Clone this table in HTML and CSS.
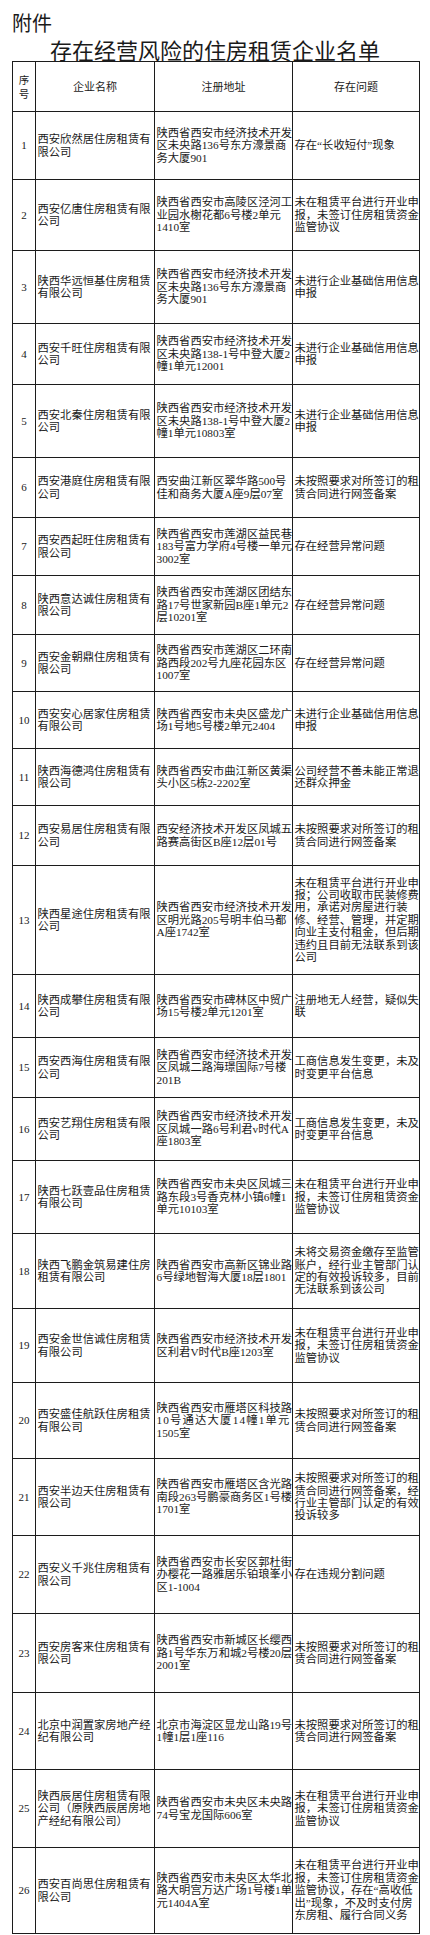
FILE: index.html
```html
<!DOCTYPE html>
<html lang="zh-CN">
<head>
<meta charset="utf-8">
<title>存在经营风险的住房租赁企业名单</title>
<link rel="stylesheet" href="styles.css">
</head>
<body>
<div class="page">
  <div class="att">附件</div>
  <h1 class="title">存在经营风险的住房租赁企业名单</h1>
  <table class="list">
    <colgroup>
      <col class="c-no"><col class="c-name"><col class="c-addr"><col class="c-issue">
    </colgroup>
    <thead>
      <tr class="h50">
        <th class="seq"><span class="seq-line">序</span><span class="seq-line">号</span></th><th>企业名称</th><th>注册地址</th><th>存在问题</th>
      </tr>
    </thead>
    <tbody>
      <tr class="h68"><td class="no">1</td><td>西安欣然居住房租赁有<br>限公司</td><td>陕西省西安市经济技术开发<br>区未央路136号东方濠景商<br>务大厦901</td><td>存在“长收短付”现象</td></tr>
      <tr class="h71"><td class="no">2</td><td>西安亿唐住房租赁有限<br>公司</td><td>陕西省西安市高陵区泾河工<br>业园水榭花都6号楼2单元<br>1410室</td><td>未在租赁平台进行开业申<br>报，未签订住房租赁资金<br>监管协议</td></tr>
      <tr class="h73"><td class="no">3</td><td>陕西华远恒基住房租赁<br>有限公司</td><td>陕西省西安市经济技术开发<br>区未央路136号东方濠景商<br>务大厦901</td><td>未进行企业基础信用信息<br>申报</td></tr>
      <tr class="h61"><td class="no">4</td><td>西安千旺住房租赁有限<br>公司</td><td>陕西省西安市经济技术开发<br>区未央路138-1号中登大厦2<br>幢1单元12001</td><td>未进行企业基础信用信息<br>申报</td></tr>
      <tr class="h73"><td class="no">5</td><td>西安北秦住房租赁有限<br>公司</td><td>陕西省西安市经济技术开发<br>区未央路138-1号中登大厦2<br>幢1单元10803室</td><td>未进行企业基础信用信息<br>申报</td></tr>
      <tr class="h60"><td class="no">6</td><td>西安港庭住房租赁有限<br>公司</td><td>西安曲江新区翠华路500号<br>佳和商务大厦A座9层07室</td><td>未按照要求对所签订的租<br>赁合同进行网签备案</td></tr>
      <tr class="h58"><td class="no">7</td><td>西安西起旺住房租赁有<br>限公司</td><td>陕西省西安市莲湖区益民巷<br>183号富力学府4号楼一单元<br>3002室</td><td>存在经营异常问题</td></tr>
      <tr class="h59"><td class="no">8</td><td>陕西意达诚住房租赁有<br>限公司</td><td>陕西省西安市莲湖区团结东<br>路17号世家新园B座1单元2<br>层10201室</td><td>存在经营异常问题</td></tr>
      <tr class="h57"><td class="no">9</td><td>西安金朝鼎住房租赁有<br>限公司</td><td>陕西省西安市莲湖区二环南<br>路西段202号九座花园东区<br>1007室</td><td>存在经营异常问题</td></tr>
      <tr class="h57"><td class="no">10</td><td>西安安心居家住房租赁<br>有限公司</td><td>陕西省西安市未央区盛龙广<br>场1号地5号楼2单元2404</td><td>未进行企业基础信用信息<br>申报</td></tr>
      <tr class="h57"><td class="no">11</td><td>陕西海德鸿住房租赁有<br>限公司</td><td>陕西省西安市曲江新区黄渠<br>头小区5栋2-2202室</td><td>公司经营不善未能正常退<br>还群众押金</td></tr>
      <tr class="h60"><td class="no">12</td><td>西安易居住房租赁有限<br>公司</td><td>西安经济技术开发区凤城五<br>路赛高街区B座12层01号</td><td>未按照要求对所签订的租<br>赁合同进行网签备案</td></tr>
      <tr class="h109"><td class="no">13</td><td>陕西星途住房租赁有限<br>公司</td><td>陕西省西安市经济技术开发<br>区明光路205号明丰伯马都<br>A座1742室</td><td>未在租赁平台进行开业申<br>报；公司收取市民装修费<br>用，承诺对房屋进行装<br>修、经营、管理，并定期<br>向业主支付租金，但后期<br>违约且目前无法联系到该<br>公司</td></tr>
      <tr class="h63"><td class="no">14</td><td>陕西成攀住房租赁有限<br>公司</td><td>陕西省西安市碑林区中贸广<br>场15号楼2单元1201室</td><td>注册地无人经营，疑似失<br>联</td></tr>
      <tr class="h60"><td class="no">15</td><td>西安西海住房租赁有限<br>公司</td><td>陕西省西安市经济技术开发<br>区凤城二路海璟国际7号楼<br>201B</td><td>工商信息发生变更，未及<br>时变更平台信息</td></tr>
      <tr class="h63"><td class="no">16</td><td>西安艺翔住房租赁有限<br>公司</td><td>陕西省西安市经济技术开发<br>区凤城一路6号利君v时代A<br>座1803室</td><td>工商信息发生变更，未及<br>时变更平台信息</td></tr>
      <tr class="h73"><td class="no">17</td><td>陕西七跃壹品住房租赁<br>有限公司</td><td>陕西省西安市未央区凤城三<br>路东段3号香克林小镇6幢1<br>单元10103室</td><td>未在租赁平台进行开业申<br>报，未签订住房租赁资金<br>监管协议</td></tr>
      <tr class="h75"><td class="no">18</td><td>陕西飞鹏金筑易建住房<br>租赁有限公司</td><td>陕西省西安市高新区锦业路<br>6号绿地智海大厦18层1801</td><td>未将交易资金缴存至监管<br>账户，经行业主管部门认<br>定的有效投诉较多，目前<br>无法联系到该公司</td></tr>
      <tr class="h74"><td class="no">19</td><td>西安金世信诚住房租赁<br>有限公司</td><td>陕西省西安市经济技术开发<br>区利君V时代B座1203室</td><td>未在租赁平台进行开业申<br>报，未签订住房租赁资金<br>监管协议</td></tr>
      <tr class="h76"><td class="no">20</td><td>西安盛佳航跃住房租赁<br>有限公司</td><td>陕西省西安市雁塔区科技路<br><span class="spread">10号通达大厦14幢1单元</span><br>1505室</td><td>未按照要求对所签订的租<br>赁合同进行网签备案</td></tr>
      <tr class="h77"><td class="no">21</td><td>西安半边天住房租赁有<br>限公司</td><td>陕西省西安市雁塔区含光路<br>南段263号鹏豪商务区1号楼<br>1701室</td><td>未按照要求对所签订的租<br>赁合同进行网签备案，经<br>行业主管部门认定的有效<br>投诉较多</td></tr>
      <tr class="h78"><td class="no">22</td><td>西安义千兆住房租赁有<br>限公司</td><td>陕西省西安市长安区郭杜街<br>办樱花一路雅居乐铂琅峯小<br>区1-1004</td><td>存在违规分割问题</td></tr>
      <tr class="h79"><td class="no">23</td><td>西安房客来住房租赁有<br>限公司</td><td>陕西省西安市新城区长缨西<br>路1号华东万和城2号楼20层<br>2001室</td><td>未按照要求对所签订的租<br>赁合同进行网签备案</td></tr>
      <tr class="h77"><td class="no">24</td><td>北京中润置家房地产经<br>纪有限公司</td><td>北京市海淀区显龙山路19号<br>1幢1层1座116</td><td>未按照要求对所签订的租<br>赁合同进行网签备案</td></tr>
      <tr class="h78"><td class="no">25</td><td>陕西辰居住房租赁有限<br>公司（原陕西辰居房地<br>产经纪有限公司）</td><td>陕西省西安市未央区未央路<br>74号宝龙国际606室</td><td>未在租赁平台进行开业申<br>报，未签订住房租赁资金<br>监管协议</td></tr>
      <tr class="h86"><td class="no">26</td><td>西安百尚思住房租赁有<br>限公司</td><td>陕西省西安市未央区太华北<br>路大明宫万达广场1号楼1单<br>元1404A室</td><td>未在租赁平台进行开业申<br>报，未签订住房租赁资金<br>监管协议，存在“高收低<br>出”现象，不及时支付房<br>东房租、履行合同义务</td></tr>
    </tbody>
  </table>
</div>
</body>
</html>
```

FILE: styles.css
```css
html, body {
  margin: 0;
  padding: 0;
  background: #ffffff;
}

body {
  color: #1a1a1a;
  font-family: "Noto Sans CJK SC", "Liberation Sans", sans-serif;
}

.page {
  width: 430px;
  padding-top: 12px;
}

.att {
  margin-left: 12px;
  font-size: 20px;
  line-height: 21px;
  font-weight: 400;
}

.title {
  margin: 4px 0 0 0;
  text-align: center;
  font-size: 22px;
  line-height: 24px;
  font-weight: 400;
  letter-spacing: 0;
}

.list {
  margin-left: 12px;
  width: 407px;
  table-layout: fixed;
  border-collapse: collapse;
  font-family: "Liberation Serif", "Noto Sans CJK SC", serif;
  font-size: 11.3px;
  line-height: 12.4px;
}

.c-no { width: 23px; }
.c-name { width: 119px; }
.c-addr { width: 138px; }
.c-issue { width: 127px; }

.list th,
.list td {
  border: 1.5px solid #1c1c1c;
  padding: 0 0 0 1.5px;
  vertical-align: middle;
  white-space: nowrap;
  overflow: visible;
}

.list th {
  font-family: "Noto Sans CJK SC", sans-serif;
  font-size: 11px;
  line-height: 13px;
  font-weight: 400;
  text-align: center;
  padding: 0;
}

.seq-line {
  display: block;
  font-size: 10.5px;
  line-height: 14px;
}

.list td {
  text-align: left;
}

.list td.no {
  text-align: center;
  padding: 0;
  font-size: 11px;
}

.spread {
  display: inline-block;
  width: 134px;
  text-align: justify;
  text-align-last: justify;
  word-spacing: 2px;
  letter-spacing: 1.1px;
}

.h50 { height: 50px; }
.h57 { height: 57px; }
.h58 { height: 58px; }
.h59 { height: 59px; }
.h60 { height: 60px; }
.h61 { height: 61px; }
.h63 { height: 63px; }
.h68 { height: 68px; }
.h71 { height: 71px; }
.h73 { height: 73px; }
.h74 { height: 74px; }
.h75 { height: 75px; }
.h76 { height: 76px; }
.h77 { height: 77px; }
.h78 { height: 78px; }
.h79 { height: 79px; }
.h86 { height: 86px; }
.h109 { height: 109px; }
```
